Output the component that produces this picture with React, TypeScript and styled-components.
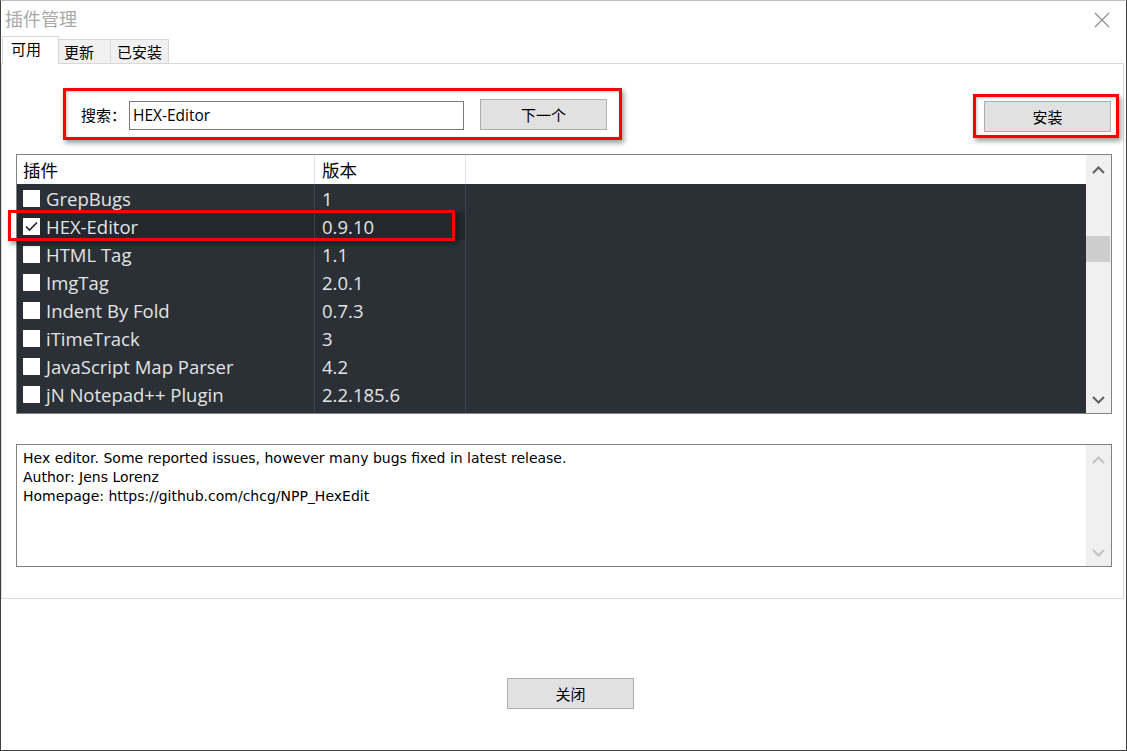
import React from "react";
import styled, { createGlobalStyle } from "styled-components";

const GlobalStyle = createGlobalStyle`
  html, body { margin: 0; padding: 0; background: #ffffff; }
  body { width: 1127px; height: 751px; overflow: hidden; font-family: "Noto Sans CJK SC", sans-serif; }
  * { box-sizing: border-box; }
`;

const CJK = `"Noto Sans CJK SC", "Noto Sans", sans-serif`;
const UI = `"Open Sans", "Noto Sans CJK SC", sans-serif`;

const Window = styled.div`
  width: 1127px;
  height: 751px;
  background: #ffffff;
  border: 1px solid #3f3f3f;
  border-top-color: #bdbdbd;
  display: flex;
  flex-direction: column;
`;

const TitleBar = styled.div`
  height: 36px;
  display: flex;
  align-items: center;
  justify-content: space-between;
  padding: 0 16px 0 4px;
`;

const Title = styled.div`
  font-family: ${CJK};
  font-size: 18px;
  color: #a8a8a8;
  margin-top: -3px;
`;

const CloseX = styled.svg`
  width: 16px;
  height: 16px;
  margin-top: 1px;
`;

const TabStrip = styled.div`
  height: 27px;
  display: flex;
  align-items: flex-end;
  padding-left: 1px;
  margin-bottom: -1px;
  position: relative;
  z-index: 1;
`;

const Tab = styled.div<{ $active?: boolean; $w: number; $pad: number }>`
  width: ${(p) => p.$w}px;
  height: ${(p) => (p.$active ? "28px" : "25px")};
  padding-left: ${(p) => p.$pad}px;
  display: flex;
  align-items: center;
  font-family: ${CJK};
  font-size: 15px;
  color: #000;
  background: ${(p) => (p.$active ? "#ffffff" : "#f0f0f0")};
  border: 1px solid #d9d9d9;
  border-bottom: ${(p) => (p.$active ? "none" : "1px solid #d9d9d9")};
  margin-left: ${(p) => (p.$active ? "0" : "-1px")};
  padding-bottom: ${(p) => (p.$active ? "4px" : "0")};
`;

const Panel = styled.div`
  width: 1123px;
  height: 536px;
  border: 1px solid #d9d9d9;
  display: flex;
  flex-direction: column;
`;

const Toolbar = styled.div`
  display: flex;
  justify-content: space-between;
  align-items: flex-start;
  padding: 0 4px 0 61px;
  margin-top: 24px;
`;

const Annotation = styled.div<{ $w: number; $h: number; $top?: number }>`
  width: ${(p) => p.$w}px;
  height: ${(p) => p.$h}px;
  margin-top: ${(p) => p.$top ?? 0}px;
  border: 3px solid #ff0000;
  box-shadow: 2px 3px 5px rgba(0, 0, 0, 0.4), inset 1px 1px 3px rgba(0, 0, 0, 0.25);
  display: flex;
  align-items: center;
`;

const SearchGroup = styled(Annotation)`
  padding-left: 15px;
`;

const InstallGroup = styled(Annotation)`
  padding-left: 8px;
`;

const Label = styled.span`
  font-family: ${CJK};
  font-size: 15px;
  color: #000;
  width: 48px;
  margin-top: 1px;
`;

const SearchInput = styled.div`
  width: 335px;
  height: 29px;
  border: 1px solid #7a7a7a;
  display: flex;
  align-items: center;
  padding-left: 3px;
  font-family: ${UI};
  font-size: 15.5px;
  color: #000;
  margin-top: 2px;
`;

const Button = styled.div<{ $gap?: number }>`
  width: 127px;
  height: 31px;
  margin-left: ${(p) => p.$gap ?? 0}px;
  background: #e1e1e1;
  border: 1px solid #adadad;
  display: flex;
  align-items: center;
  justify-content: center;
  font-family: ${CJK};
  font-size: 15px;
  color: #000;
`;

const ListView = styled.div`
  position: relative;
  margin: 14px 11px 0 14px;
  height: 260px;
  border: 1px solid #828282;
  display: flex;
`;

const ListContent = styled.div`
  flex: 1;
  display: flex;
  flex-direction: column;
  background: #2a3035;
`;

const HeaderRow = styled.div`
  height: 29px;
  background: #ffffff;
  display: grid;
  grid-template-columns: 298px 151px 1fr;
`;

const HeaderCell = styled.div<{ $pad: number }>`
  border-right: 1px solid #e5e5e5;
  padding-left: ${(p) => p.$pad}px;
  display: flex;
  align-items: center;
  font-family: ${CJK};
  font-size: 17.5px;
  color: #000;
  &:last-child { border-right: none; }
`;

const Row = styled.div`
  height: 28px;
  display: grid;
  grid-template-columns: 298px 151px 1fr;
`;

const Cell = styled.div<{ $selected?: boolean; $pad: number }>`
  background: ${(p) => (p.$selected ? "#23282c" : "transparent")};
  border-right: 1px solid #3b444b;
  padding-left: ${(p) => p.$pad}px;
  padding-top: 1px;
  display: flex;
  align-items: center;
  gap: 6px;
  font-family: ${UI};
  font-size: 18.5px;
  color: #e2e4e5;
  white-space: nowrap;
  &:last-child { border-right: none; }
`;

const FillRow = styled.div`
  flex: 1;
  display: grid;
  grid-template-columns: 298px 151px 1fr;
`;

const FillCell = styled.div`
  border-right: 1px solid #3b444b;
  &:last-child { border-right: none; }
`;

const Check = styled.div`
  width: 17px;
  height: 17px;
  background: #ffffff;
  flex: none;
  display: flex;
  align-items: center;
  justify-content: center;
`;

const ScrollBar = styled.div`
  width: 25px;
  background: #f0f0f0;
  display: flex;
  flex-direction: column;
  align-items: center;
  position: relative;
`;

const Arrow = styled.svg<{ $end?: boolean }>`
  width: 13px;
  height: 8px;
  margin-top: ${(p) => (p.$end ? "auto" : "11px")};
  margin-bottom: ${(p) => (p.$end ? "9px" : "0")};
`;

const Thumb = styled.div`
  position: absolute;
  left: 0;
  top: 81px;
  width: 24px;
  height: 26px;
  background: #cdcdcd;
`;

const RowMark = styled.div`
  position: absolute;
  left: -9px;
  top: 55px;
  width: 447px;
  height: 31px;
  border: 3px solid #ff0000;
  box-shadow: 2px 3px 5px rgba(0, 0, 0, 0.4);
  pointer-events: none;
`;

const DescBox = styled.div`
  margin: 30px 11px 0 14px;
  height: 123px;
  border: 1px solid #828282;
  display: flex;
`;

const DescText = styled.div`
  flex: 1;
  padding: 4px 6px;
  font-family: "DejaVu Sans", "Liberation Sans", sans-serif;
  font-size: 14px;
  line-height: 19px;
  color: #000;
`;

const Footer = styled.div`
  display: flex;
  padding: 79px 0 0 506px;
`;

const plugins: { name: string; version: string; checked?: boolean }[] = [
  { name: "GrepBugs", version: "1" },
  { name: "HEX-Editor", version: "0.9.10", checked: true },
  { name: "HTML Tag", version: "1.1" },
  { name: "ImgTag", version: "2.0.1" },
  { name: "Indent By Fold", version: "0.7.3" },
  { name: "iTimeTrack", version: "3" },
  { name: "JavaScript Map Parser", version: "4.2" },
  { name: "jN Notepad++ Plugin", version: "2.2.185.6" },
];

const ChevronUp = ({ color, end }: { color: string; end?: boolean }) => (
  <Arrow viewBox="0 0 13 8" $end={end}>
    <polyline points="1,7 6.5,1.5 12,7" fill="none" stroke={color} strokeWidth="2" />
  </Arrow>
);

const ChevronDown = ({ color, end }: { color: string; end?: boolean }) => (
  <Arrow viewBox="0 0 13 8" $end={end}>
    <polyline points="1,1 6.5,6.5 12,1" fill="none" stroke={color} strokeWidth="2" />
  </Arrow>
);

export default function App() {
  return (
    <>
      <GlobalStyle />
      <Window>
        <TitleBar>
          <Title>插件管理</Title>
          <CloseX viewBox="0 0 16 16">
            <line x1="1" y1="1" x2="15" y2="15" stroke="#8a8a8a" strokeWidth="1.1" />
            <line x1="15" y1="1" x2="1" y2="15" stroke="#8a8a8a" strokeWidth="1.1" />
          </CloseX>
        </TitleBar>
        <TabStrip>
          <Tab $active $w={57} $pad={8}>可用</Tab>
          <Tab $w={53} $pad={5}>更新</Tab>
          <Tab $w={59} $pad={6}>已安装</Tab>
        </TabStrip>
        <Panel>
          <Toolbar>
            <SearchGroup $w={559} $h={52}>
              <Label>搜索：</Label>
              <SearchInput>HEX-Editor</SearchInput>
              <Button $gap={16}>下一个</Button>
            </SearchGroup>
            <InstallGroup $w={146} $h={44} $top={6}>
              <Button>安装</Button>
            </InstallGroup>
          </Toolbar>

          <ListView>
            <ListContent>
              <HeaderRow>
                <HeaderCell $pad={6}>插件</HeaderCell>
                <HeaderCell $pad={7}>版本</HeaderCell>
                <HeaderCell $pad={0} />
              </HeaderRow>
              {plugins.map((p) => (
                <Row key={p.name}>
                  <Cell $pad={6} $selected={p.checked}>
                    <Check>
                      {p.checked && (
                        <svg width="13" height="11" viewBox="0 0 13 11">
                          <polyline points="1,5.5 4.5,9 12,1.5" fill="none" stroke="#222" strokeWidth="1.6" />
                        </svg>
                      )}
                    </Check>
                    {p.name}
                  </Cell>
                  <Cell $pad={7} $selected={p.checked}>{p.version}</Cell>
                  <Cell $pad={0} />
                </Row>
              ))}
              <FillRow>
                <FillCell />
                <FillCell />
                <FillCell />
              </FillRow>
            </ListContent>
            <ScrollBar>
              <ChevronUp color="#606060" />
              <Thumb />
              <ChevronDown color="#606060" end />
            </ScrollBar>
            <RowMark />
          </ListView>

          <DescBox>
            <DescText>
              Hex editor. Some reported issues, however many bugs fixed in latest release.
              <br />
              Author: Jens Lorenz
              <br />
              Homepage: https://github.com/chcg/NPP_HexEdit
            </DescText>
            <ScrollBar>
              <ChevronUp color="#c2c2c2" />
              <ChevronDown color="#c2c2c2" end />
            </ScrollBar>
          </DescBox>
        </Panel>
        <Footer>
          <Button>关闭</Button>
        </Footer>
      </Window>
    </>
  );
}
